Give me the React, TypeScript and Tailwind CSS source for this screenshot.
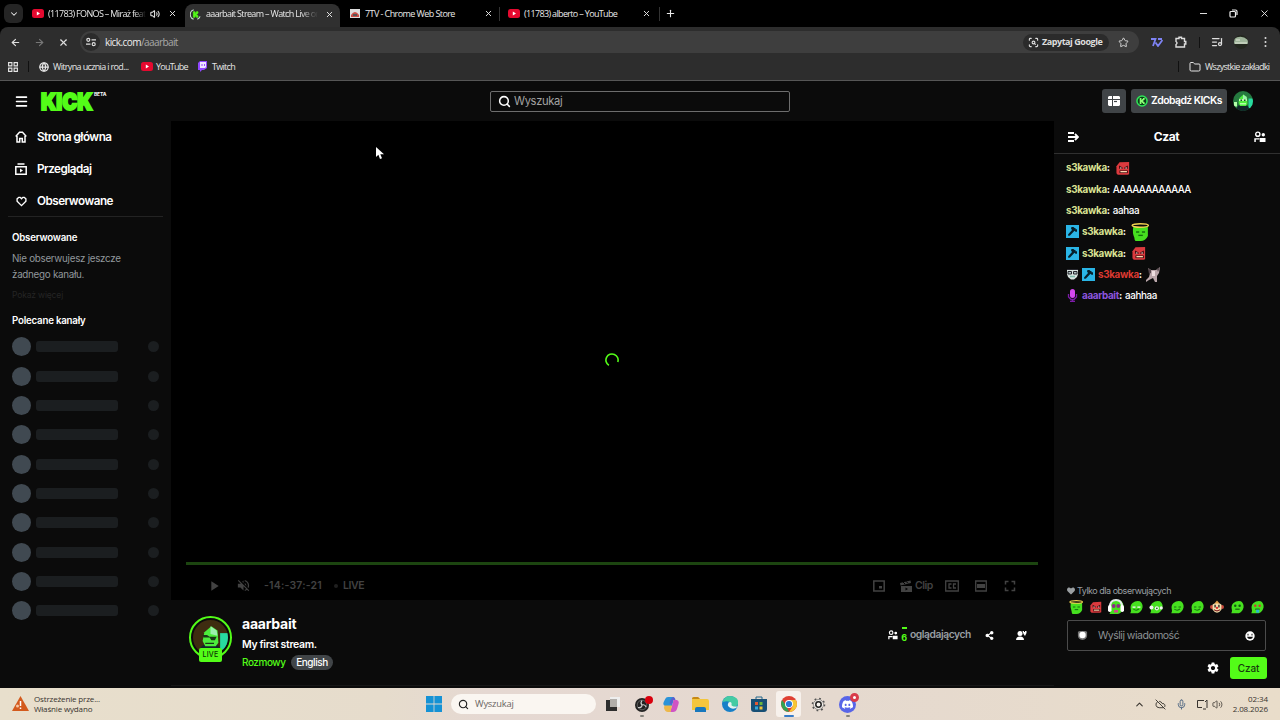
import React from 'react';
import { ArrowLeft, ArrowRight, ChevronDown, ChevronUp, Folder, Globe, Menu, Plus, Search, Star, Volume2, X, ScanSearch, Mic, CloudOff, ListMusic } from 'lucide-react';
import { FaShareAlt, FaHeart } from 'react-icons/fa';
import { MdSettings, MdVolumeOff, MdPlayArrow, MdFullscreen } from 'react-icons/md';
import { SiDiscord } from 'react-icons/si';

type EmoteKind = 'halo' | 'angry' | 'phones' | 'wink' | 'side' | 'smile' | 'lean' | 'clown' | 'think' | 'cry';

const YouTubeIcon = () => (
    <svg width="12" height="9" viewBox="0 0 12 9" className="shrink-0">
        <rect width="12" height="9" rx="2.5" fill="#e5092f" />
        <path d="M4.8 2.6v3.8L8 4.5z" fill="#fff" />
    </svg>
);

const KickBadge = ({ size = 11, dark = false }: { size?: number; dark?: boolean }) => (
    <svg width={size} height={size} viewBox="0 0 12 12" className="shrink-0">
        {dark ? (
            <path d="M4 .8A5.500 5.500 0 0 0 4 11.200M8 11.200A5.500 5.500 0 0 0 11 8" fill="none" stroke="#c5ded0" strokeWidth="1.200" />
        ) : (
            <>
                <circle cx="6" cy="6" r="5.800" fill="#2fe658" />
                <circle cx="6" cy="6" r="4.300" fill="#0a3d19" />
            </>
        )}
        <path d="M3.700 3h1.700v1.800h.7V4h.8V3h1.800v1.700h-.8v.8H7v1h.9v.8h.8V9H6.900V8h-.8v-.8h-.7V9H3.700z" fill={dark ? '#53fc18' : '#8dff74'} stroke={dark ? '#53fc18' : 'none'} strokeWidth=".8" />
    </svg>
);

const Emote = ({ kind, size = 14 }: { kind: EmoteKind; size?: number }) => {
    const red = kind === 'angry';
    const plain = kind === 'halo' || kind === 'wink' || kind === 'smile' || kind === 'lean';
    return (
        <svg width={size} height={size} viewBox="0 0 16 16" className="shrink-0">
            {red && (
                <>
                    <path d="M4 1.500L15 1v14l-2 .8H2L.5 14V6z" fill="#dc3a3e" />
                    <path d="M3.500 5l4 2.300v1.500h-4zM13.500 5l-4 2.300v1.500h4z" fill="#3a0a0e" />
                    <path d="M4.500 8h1.800M10.700 8h1.800" stroke="#ffe9e0" strokeWidth="1.200" />
                    <path d="M4 10.800h9.500v3H4z" fill="#3a0a0e" />
                    <path d="M5 12.200h7.500" stroke="#ffd6b0" strokeWidth="1.500" />
                </>
            )}
            {kind === 'clown' && (
                <>
                    <circle cx="2.300" cy="8" r="2.300" fill="#c94a3d" />
                    <circle cx="13.700" cy="8" r="2.300" fill="#c94a3d" />
                    <path d="M3 5Q8 1 13 5v6q-5 7-10 0z" fill="#f5dfad" />
                    <path d="M5 4l3-3.500L11 4z" fill="#e5a04c" />
                    <path d="M5.800 5.500v3M10.200 5.500v3" stroke="#202020" strokeWidth="1.500" />
                    <circle cx="8" cy="9" r="1.300" fill="#e12e2e" />
                    <path d="M4.500 11q3.500 3 7 0" stroke="#7d2222" strokeWidth="1.300" fill="none" />
                </>
            )}
            {!red && kind !== 'clown' && (
                <>
                    <path d={kind === 'halo' ? 'M2 3.500h13v8Q13 16 8.500 16H4q-1-1-1-3Q1 9 2 3.500z' : 'M4 3.500Q8 0 12.500 1.500Q16 4 15.500 8.500Q14 14 10 15H1.500q1.500-2 .5-4.500Q1 6 4 3.500z'} fill="#46e01f" />
                    {plain && (
                        <>
                            <path d="M4.500 8h2.800M9.700 8h2.800" stroke="#14720f" strokeWidth="1.200" />
                            <path d={kind === 'halo' ? 'M6.500 11h4' : 'M5 10.500q3.500 2.500 6.500-.3'} stroke="#14720f" strokeWidth="1.200" fill="none" />
                        </>
                    )}
                    {kind === 'wink' && <path d="M4 7h3.500v2H4zM9.500 7H13v2H9.500z" fill="#c9f7c0" />}
                    {kind === 'halo' && <ellipse cx="8.200" cy="2.200" rx="7.200" ry="1.500" fill="none" stroke="#f2d34f" strokeWidth="1.300" />}
                    {kind === 'phones' && (
                        <>
                            <path d="M2 8Q2 1 8 1t6 7" stroke="#e4ecec" strokeWidth="2" fill="none" />
                            <rect x="0" y="6" width="3.500" height="7" rx="1.700" fill="#fff" />
                            <rect x="12.500" y="6" width="3.500" height="7" rx="1.700" fill="#fff" />
                            <circle cx="5.700" cy="7" r="1.900" fill="#8b2b86" />
                            <circle cx="10.300" cy="7" r="1.900" fill="#8b2b86" />
                            <path d="M6 11h4v2.500H6z" fill="#d1458c" />
                        </>
                    )}
                    {kind === 'side' && (
                        <>
                            <circle cx="2.800" cy="8.500" r="2.300" fill="#f2f2f2" />
                            <circle cx="14" cy="9" r="1.800" fill="#f2f2f2" />
                            <circle cx="9" cy="9.500" r="2.400" fill="#f2f2f2" />
                            <circle cx="9" cy="9.500" r="1" fill="#14720f" />
                        </>
                    )}
                    {(kind === 'think' || kind === 'cry') && (
                        <>
                            <circle cx="6" cy="6.500" r="1.400" fill={kind === 'cry' ? '#d13636' : '#14560f'} />
                            <circle cx="11" cy="6.500" r="1.400" fill={kind === 'cry' ? '#d13636' : '#14560f'} />
                            <path d="M6 10.500h5" stroke="#14560f" strokeWidth="1.300" />
                            {kind === 'cry' && <path d="M7 11h3.500v3.500H7z" fill="#29b8cf" />}
                        </>
                    )}
                </>
            )}
        </svg>
    );
};

const ModBadge = () => (
    <svg width="13" height="13" viewBox="0 0 13 13" className="mr-[3px] shrink-0">
        <rect width="13" height="13" fill="#2ab5e6" />
        <path d="M5.500 2h2l1 1h1v1.200h1.500v2.500H9.500l-1-1L4 10.500L2.500 11L2 9.500L6 5L5 3.500z" fill="#06202b" />
    </svg>
);

const UsersIcon = ({ size = 12, className = '' }: { size?: number; className?: string }) => (
    <svg width={size} height={size} viewBox="0 0 12 12" className={className} fill="currentColor">
        <circle cx="3.800" cy="3.200" r="2.100" fill="none" stroke="currentColor" strokeWidth="1.400" />
        <circle cx="9.300" cy="3.700" r="1.700" />
        <path d="M.3 11V7.200h5v1.400H1.800V11zM5.700 7h5.800v4H5.700z" />
    </svg>
);

const StreamerAvatar = ({ size, bright = false }: { size: number; bright?: boolean }) => (
    <svg width={size} height={size} viewBox="0 0 40 40" className="rounded-full">
        <rect width="40" height="40" fill={bright ? '#25793f' : '#3e2c10'} />
        <rect x="31" y="15" width="9" height="19" fill="#27dba0" />
        <path d="M7 40q0-11 7-12h12q7 2 6 12z" fill="#11252a" />
        <path d="M13 14l8-7l7 5l1 14l-3 4H14l-3-6z" fill="#4cec3c" />
        <path d="M20 7l7 5l1 6l-8-2z" fill="#9bf1ae" />
        {!bright && <path d="M11 17h5l3 2h8l-2 4h-4l-2-3h-7zM14 26h10v1.300H14z" fill="#173616" />}
        {bright && <path d="M12 16h16v4H12zM14 24h12v3H14zM2 22h6v9H2z" fill="#b4ffa9" />}
        {bright && <path d="M15 17h3v3h-3zM22 17h3v3h-3z" fill="#174d2b" />}
    </svg>
);

const TabText = ({ width, children }: { width: string; children: React.ReactNode }) => (
    <span className={`${width} shrink-0 whitespace-nowrap text-[9px] leading-[14px]`}>{children}</span>
);

const BrowserTabs = () => (
    <div className="flex h-[27px] shrink-0 items-center bg-black pl-1 font-['Open_Sans',sans-serif] font-medium tracking-[-0.66px] text-[#e9e9e9]">
        <div className="flex h-[19px] w-[19px] items-center justify-center rounded-md bg-[#252525]"><ChevronDown size={10} strokeWidth={2.5} /></div>
        <div className="flex w-[162px] shrink-0 items-center pl-[9px]">
            <YouTubeIcon />
            <span className="w-1" />
            <TabText width="w-[98px] [mask-image:linear-gradient(90deg,black_88%,transparent)]">(11783) FONOS – Miraż feat</TabText>
            <Volume2 size={10} strokeWidth={2.5} className="ml-[4px]" />
            <X size={9} strokeWidth={2.5} className="ml-[8px]" />
        </div>
        <div className="flex h-[23px] w-[155px] shrink-0 items-center self-end rounded-t-lg bg-[#303030] pb-[3px] pl-[5px]">
            <KickBadge dark />
            <span className="w-[5px]" />
            <TabText width="w-[112px] [mask-image:linear-gradient(90deg,black_84%,transparent)]">aaarbait Stream – Watch Live on</TabText>
            <X size={9} strokeWidth={2.5} className="ml-[7px]" />
        </div>
        <div className="flex w-[160px] shrink-0 items-center border-r border-[#333] pl-[10px]">
            <svg width="10" height="9" viewBox="0 0 10 9"><rect width="10" height="9" fill="#ddd" /><path d="M1 6q4-6 8 0v2H1z" fill="#c94c45" /><path d="M3 5h4v2H3z" fill="#555" /></svg>
            <span className="w-[5px]" />
            <TabText width="w-[113px] tracking-[-0.58px]">7TV - Chrome Web Store</TabText>
            <X size={9} strokeWidth={2.5} className="ml-[6px]" />
        </div>
        <div className="flex w-[160px] shrink-0 items-center border-r border-[#333] pl-[8px]">
            <YouTubeIcon />
            <span className="w-[4px]" />
            <TabText width="w-[113px]">(11783) alberto – YouTube</TabText>
            <X size={9} strokeWidth={2.5} className="ml-[5px]" />
        </div>
        <Plus size={11} strokeWidth={2.4} className="ml-[5px]" />
        <div className="ml-auto flex items-center pr-[10px]">
            <span className="mr-[22px] h-px w-[7px] bg-[#ddd]" />
            <svg width="9" height="9" viewBox="0 0 9 9" fill="none" stroke="#eee" strokeWidth="1.200" className="mr-[21px]"><rect x="1" y="2.500" width="5.500" height="5.500" rx="1" /><path d="M3 1h3.500Q8 1 8 2.500V6" /></svg>
            <X size={11} strokeWidth={2} />
        </div>
    </div>
);

const Toolbar = () => (
    <div className="shrink-0 bg-black">
        <div className="flex h-[29px] items-center rounded-t-lg bg-[#2d2d2d] pl-[10px] pt-[1px] font-['Open_Sans',sans-serif] text-[#dedede]">
            <ArrowLeft size={11} strokeWidth={2.5} />
            <ArrowRight size={11} strokeWidth={2.5} className="ml-[13px] text-[#777]" />
            <X size={11} strokeWidth={2.5} className="ml-[13px]" />
            <div className="ml-[11px] flex h-[22px] w-[1059px] shrink-0 items-center rounded-full bg-[#3e3e3e] pl-[2px]">
                <span className="flex h-[18px] w-[18px] items-center justify-center rounded-full bg-[#2b2b2b]">
                    <svg width="10" height="10" viewBox="0 0 10 10" fill="none" stroke="currentColor" strokeWidth="1.200"><circle cx="2.300" cy="2.800" r="1.500" /><path d="M5.500 2.800H10M0 7.200h4.500" /><circle cx="7.700" cy="7.200" r="1.500" /></svg>
                </span>
                <span className="ml-[5px] text-[10px] tracking-[-0.58px] text-[#a9a9a9]"><span className="text-[#eee]">kick.com</span>/aaarbait</span>
                <div className="ml-auto flex h-[17px] w-[86px] shrink-0 items-center rounded-full bg-[#2b2b2b] pl-[5px]">
                    <ScanSearch size={11} strokeWidth={2.5} />
                    <span className="ml-[3px] whitespace-nowrap text-[9px] font-bold tracking-[-0.45px]">Zapytaj Google</span>
                </div>
                <Star size={11} strokeWidth={2} className="ml-[9px] mr-[10px] shrink-0" />
            </div>
            <svg width="12" height="9" viewBox="0 0 12 9" className="ml-[12px]" fill="none" stroke="#7e83f4" strokeWidth="1.800"><path d="M0 1h4.500L2 8M4.500 4.500L7 8l4.500-6M7 1h4" /></svg>
            <svg width="12" height="12" viewBox="0 0 12 12" fill="none" stroke="currentColor" strokeWidth="1.400" className="ml-[12px]"><path d="M1 2.500h3V1.200h2.500v1.300h3V5.500h1.300V8H9.500v3H1V8.500q2-1.500 0-3z" /></svg>
            <span className="ml-[12px] h-[11px] w-px bg-[#111]" />
            <ListMusic size={12} strokeWidth={2.5} className="ml-[11px]" />
            <svg width="14" height="14" viewBox="0 0 14 14" className="ml-[11px] rounded-full"><rect width="14" height="14" fill="#23271f" /><path d="M0 4q7-5 14 1v4H0z" fill="#9fb49b" /><path d="M2 5h4M1 8h12" stroke="#e1e7d8" /></svg>
            <svg width="3" height="10" viewBox="0 0 3 10" fill="currentColor" className="ml-[16px]"><circle cx="1.500" cy="1" r="1" /><circle cx="1.500" cy="5" r="1" /><circle cx="1.500" cy="9" r="1" /></svg>
        </div>
        <div className="flex h-[25px] items-center border-b border-[#565656] bg-[#2d2d2d] pb-[3px] pl-[8px] font-['Open_Sans',sans-serif] text-[9px] font-medium tracking-[-0.65px] text-[#e6e6e6]">
            <svg width="10" height="10" viewBox="0 0 10 10" fill="none" stroke="currentColor" strokeWidth="1.100"><path d="M.6.6h3.300v3.300H.6zM6.100.6h3.300v3.300H6.100zM.6 6.100h3.300v3.300H.6zM6.100 6.100h3.300v3.300H6.100z" /></svg>
            <span className="ml-[10px] h-[11px] w-px bg-[#101010]" />
            <Globe size={10} strokeWidth={3} className="ml-[10px]" />
            <span className="ml-[4px] w-[88px] whitespace-nowrap">Witryna ucznia i rod...</span>
            <YouTubeIcon />
            <span className="ml-[3px] w-[41px] tracking-[-0.75px]">YouTube</span>
            <svg width="11" height="11" viewBox="0 0 11 11"><path d="M1 2l2-2h7v7L7 9H5l-2 2V9H1z" fill="#9147ff" /><path d="M3 1h6v5L8 7H3z" fill="#eee5ff" /><path d="M5 3v2M7.500 3v2" stroke="#9147ff" /></svg>
            <span className="ml-[4px] tracking-[-0.7px]">Twitch</span>
            <div className="ml-auto flex items-center pr-[10px]">
                <span className="mr-[10px] h-[11px] w-px bg-[#101010]" />
                <Folder size={12} strokeWidth={2} />
                <span className="ml-[4px] w-[65px] whitespace-nowrap tracking-[-0.7px]">Wszystkie zakładki</span>
            </div>
        </div>
    </div>
);

const KickHeader = () => (
    <header className="flex h-[40px] shrink-0 items-center bg-[#0b0b0b] pl-[14px]">
        <Menu size={15} strokeWidth={2.5} />
        <div className="ml-[12px] flex h-[20px] w-[65px] items-start">
            <span className="w-[53px] origin-left translate-y-[1px] scale-x-[0.86] text-[23.5px] font-black leading-[20px] text-[#53fc18] [-webkit-text-stroke:2px_#53fc18]">KICK</span>
            <span className="text-[5px] font-bold leading-[6px] tracking-[-0.2px]">BETA</span>
        </div>
        <div className="ml-[384px] flex h-[21px] w-[300px] items-center rounded-[2px] border border-[#6d6d6d] bg-[#0b0b0b] pl-[7px]">
            <Search size={13} strokeWidth={2.8} />
            <span className="ml-[3px] pt-px text-[11.2px] tracking-[-0.35px] text-[#a3a3a3]">Wyszukaj</span>
        </div>
        <div className="ml-[312px] flex h-[24px] w-[24px] items-center justify-center rounded-[3px] bg-[#404447]">
            <svg width="12" height="10" viewBox="0 0 12 10" fill="#fff"><path d="M1 0h3v3H0V1zM5 0h6l1 1v2H5zM0 4h4v6H1L0 9zM5 4h7v5l-1 1H5z" /><path d="M6 5.500h3" stroke="#404447" strokeWidth="1.200" /></svg>
        </div>
        <div className="ml-[5px] flex h-[24px] w-[96px] items-center rounded-[3px] bg-[#404447] pl-[5px]">
            <KickBadge size={12} />
            <span className="ml-[3px] whitespace-nowrap text-[10.4px] font-semibold tracking-[-0.55px]">Zdobądź KICKs</span>
        </div>
        <div className="ml-[6px]"><StreamerAvatar size={20} bright /></div>
    </header>
);

const Sidebar = () => (
    <aside className="flex w-[171px] shrink-0 flex-col bg-[#0b0b0b]">
        <nav className="mx-[8px] h-[96px] border-b border-[#232323] text-[11.7px] font-semibold tracking-[-0.5px]">
            <div className="flex h-[32px] items-center pl-[7px]">
                <svg width="12" height="12" viewBox="0 0 12 12" fill="none" stroke="#fff" strokeWidth="1.500"><path d="M.7 5.500L4.500 1.300h3l3.800 4.200M2 5v6h2.700V7.500h2.600V11H10V5" /></svg>
                <span className="ml-[10px] pt-px">Strona główna</span>
            </div>
            <div className="flex h-[32px] items-center pl-[7px]">
                <svg width="12" height="12" viewBox="0 0 12 12" fill="none" stroke="#fff" strokeWidth="1.500"><path d="M2.500 1h7M.8 3.800h10.400v7.400H.8z" /><path d="M5 5.500v4l3-2z" fill="#fff" stroke="none" /></svg>
                <span className="ml-[10px] pt-px">Przeglądaj</span>
            </div>
            <div className="flex h-[32px] items-center pl-[8px]">
                <svg width="11" height="11" viewBox="0 0 12 12" fill="none" stroke="#fff" strokeWidth="1.500"><path d="M6 10.500L1.200 5.800V3L3 1.500h1.500L6 3l1.500-1.500H9L10.800 3v2.800z" /></svg>
                <span className="ml-[10px] pt-px">Obserwowane</span>
            </div>
        </nav>
        <div className="pl-[12px] pt-[14px]">
            <h2 className="text-[9.7px] font-semibold leading-[14px] tracking-[-0.2px]">Obserwowane</h2>
            <p className="mt-[6px] text-[9.8px] leading-4 tracking-[-0.27px] text-[#91979b]">Nie obserwujesz jeszcze<br />żadnego kanału.</p>
            <p className="mt-[5px] text-[8.5px] leading-[14px] tracking-[-0.15px] text-[#252525]">Pokaż więcej</p>
            <h2 className="mt-[12px] text-[9.7px] font-semibold leading-[14px] tracking-[-0.2px]">Polecane kanały</h2>
        </div>
        <div className="mt-[4px] flex flex-col">
            {Array.from({ length: 10 }, (_, index) => (
                <div key={index} className="flex h-[29.35px] items-center pl-[12px]">
                    <span className="h-[19px] w-[19px] rounded-full bg-[#404951]" />
                    <span className="ml-[5px] h-[11px] w-[82px] rounded-[3px] bg-[#1b1e20]" />
                    <span className="ml-[30px] h-[11px] w-[11px] rounded-full bg-[#1b1e20]" />
                </div>
            ))}
        </div>
    </aside>
);

const Player = () => (
    <div className="relative flex h-[479px] shrink-0 flex-col justify-end bg-black">
        <svg width="14" height="14" viewBox="0 0 14 14" className="absolute left-[434px] top-[232px]" fill="none" stroke="#53fc18" strokeWidth="1.600">
            <path d="M3.900 12.300A6.100 6.100 0 1 1 12.800 9" />
        </svg>
        <svg width="9" height="14" viewBox="0 0 9 14" className="absolute left-[204px] top-[25px]">
            <path d="M1 1v10l2.400-2.200L5 13l2-.8l-1.700-3.900H9z" fill="#fff" />
        </svg>
        <div className="ml-[15px] mr-[16px] h-[3px] bg-[#1c4510]" />
        <div className="flex h-[35px] items-center pl-[35px] pt-[6px] text-[10.5px] font-semibold text-[#424242]">
            <MdPlayArrow size={16} />
            <MdVolumeOff size={15} className="ml-[14px]" />
            <span className="ml-[13px] w-[59px] whitespace-nowrap pt-px tracking-[0.2px]">-14:-37:-21</span>
            <span className="ml-[11px] h-[4px] w-[4px] rounded-full bg-[#202020]" />
            <span className="ml-[5px] pt-px tracking-[-0.4px]">LIVE</span>
            <div className="ml-auto flex items-center pr-[35px]">
                <svg width="12" height="12" viewBox="0 0 12 12" fill="none" stroke="currentColor" strokeWidth="1.500"><path d="M.8 1h10.400v10H.8z" /><path d="M6 6h3v2.500H6z" fill="currentColor" stroke="none" /></svg>
                <svg width="12" height="12" viewBox="0 0 12 12" fill="currentColor" className="ml-[15px]"><path d="M0 3l10.500-2.500l.5 2.500L.5 5.500zM1 6h11v6H1z" /><path d="M3 2l2 2M6 1.300l2 2" stroke="#000" /><path d="M5.500 7.500v3L8 9z" fill="#000" /></svg>
                <span className="ml-[3px] w-[17px] pt-px tracking-[-0.5px]">Clip</span>
                <svg width="14" height="12" viewBox="0 0 14 12" fill="none" stroke="currentColor" strokeWidth="1.300" className="ml-[13px]"><path d="M.7 1h12.600v10H.7zM6.500 4H4v4h2.500M11 4H8.500v4H11" /></svg>
                <svg width="12" height="12" viewBox="0 0 12 12" fill="none" stroke="currentColor" strokeWidth="1.300" className="ml-[16px]"><path d="M.7 1h10.600v10H.7z" /><path d="M2 4h8v4H2z" fill="currentColor" stroke="none" /></svg>
                <MdFullscreen size={18} className="ml-[14px]" />
            </div>
        </div>
    </div>
);

const StreamInfo = () => (
    <div className="flex h-[86px] shrink-0 border-b border-[#171717] pl-[18px] pt-[16px]">
        <div className="relative h-[43px] w-[43px] rounded-full border-2 border-[#53fc18] p-[2px]">
            <StreamerAvatar size={35} />
            <span className="absolute left-[8px] top-[30px] flex h-[14px] w-[23px] items-center justify-center rounded-[2px] bg-[#53fc18] text-[7px] font-medium tracking-[0.3px] text-[#0b3205]">LIVE</span>
        </div>
        <div className="ml-[10px]">
            <h1 className="text-[14px] font-bold leading-[16px] tracking-[-0.25px]">aaarbait</h1>
            <p className="mt-[6px] text-[10.5px] font-semibold leading-[14px] tracking-[-0.35px]">My first stream.</p>
            <div className="mt-[2px] flex h-[16px] items-center text-[10px] font-medium tracking-[-0.45px]">
                <span className="w-[44px] pt-px">
                    <span className="text-[#53fc18]">Rozmowy</span>
                </span>
                <span className="ml-[5px] flex h-[15px] w-[42px] items-center justify-center rounded-full bg-[#414548]">English</span>
            </div>
        </div>
        <div className="ml-auto flex h-[38px] items-center pr-[27px] text-[10.3px] font-semibold tracking-[-0.45px] text-[#979ea2]">
            <UsersIcon size={10} className="text-white" />
            <span className="ml-[2px] flex h-[16px] w-[8px] flex-col items-center justify-between text-[#53fc18]">
                <span className="h-[2px] w-[5px] bg-[#53fc18]" />
                <span className="text-[9px] font-bold leading-[10px]">6</span>
            </span>
            <span className="ml-[2px] w-[61px]">oglądających</span>
            <FaShareAlt size={9} className="ml-[14px] text-white" />
            <svg width="11" height="11" viewBox="0 0 11 11" fill="#fff" className="ml-[22px]"><circle cx="4" cy="3.500" r="2.500" /><path d="M0 10Q0 6.500 4 6.500T8 10zM6.500 1H8v1h1V1h1.500v2L9 6L7.500 4z" /></svg>
        </div>
    </div>
);

const Username = ({ color, name = 's3kawka' }: { color: string; name?: string }) => (
    <span className="font-bold"><span className={color}>{name}</span>:</span>
);

const Chat = () => (
    <section className="flex w-[226px] shrink-0 flex-col bg-[#0b0b0b]">
        <div className="flex h-[33px] shrink-0 items-center justify-between border-b border-[#303030] pl-[14px] pr-[14px] text-[12px] font-bold tracking-[-0.4px]">
            <svg width="11" height="10" viewBox="0 0 11 10" fill="none" stroke="#fff" strokeWidth="1.800"><path d="M0 1h6M0 5h10M0 9h6M7 2l3 3l-3 3" /></svg>
            <span>Czat</span>
            <UsersIcon size={12} />
        </div>
        <div className="flex flex-col pl-[12px] pt-[3px] text-[9.9px] font-medium tracking-[-0.35px] [&>div]:flex [&>div]:h-[21.35px] [&>div]:items-center">
            <div><Username color="text-[#dbe293]" /><span className="w-[6px]" /><Emote kind="angry" size={14} /></div>
            <div><Username color="text-[#dbe293]" /><span className="ml-[3px] tracking-[-0.65px]">AAAAAAAAAAAA</span></div>
            <div><Username color="text-[#dbe293]" /><span className="ml-[3px]">aahaa</span></div>
            <div><ModBadge /><Username color="text-[#dbe293]" /><span className="w-[5px]" /><Emote kind="halo" size={18} /></div>
            <div><ModBadge /><Username color="text-[#dbe293]" /><span className="w-[6px]" /><Emote kind="angry" size={14} /></div>
            <div>
                <svg width="13" height="12" viewBox="0 0 13 12" className="mr-[3px]"><path d="M1 1h11v5l-1 3l-3 2.500H5L2 9L1 6z" fill="#d8e3df" /><path d="M1 1.500h11M2 3.500h3.500v2.500H2zM7.500 3.500H11v2.500H7.500z" stroke="#26262c" fill="#aebfc0" /><path d="M4 8.500h5" stroke="#7db8a8" strokeWidth="1.500" /></svg>
                <ModBadge /><Username color="text-[#dc3931]" />
                <svg width="17" height="17" viewBox="0 0 17 17" className="ml-[2px]"><path d="M4 2l3 2h5l4-3l-1 6l-2 3v6h-2l-2-4l-4 2l-3 2v-2l3-3l1-4z" fill="#bba7ab" /><path d="M4 2l3 2v3L5 8zM13 3l3-2l-2 5z" fill="#54464c" /><path d="M8 5h3v5H8z" fill="#eedee0" /></svg>
            </div>
            <div>
                <svg width="13" height="13" viewBox="0 0 13 13" className="mr-[3px]"><rect x="4" y="0" width="5" height="9" rx="2.500" fill="#d449f0" /><path d="M2.500 5v3l2.500 2.500h3L10.500 8V5M6.500 10v3M4 12.500h5" stroke="#7d1ca9" strokeWidth="1.300" fill="none" /></svg>
                <Username color="text-[#8d55df]" name="aaarbait" /><span className="ml-[3px]">aahhaa</span>
            </div>
        </div>
        <div className="mt-auto pb-[9px] pl-[13px] pr-[14px]">
            <div className="flex h-[13px] items-center whitespace-nowrap text-[9px] tracking-[-0.48px] text-[#9a9fa2]"><FaHeart size={8} className="mr-[2px]" />Tylko dla obserwujących</div>
            <div className="mt-[1px] flex justify-between pl-[1px] pr-[1px]">
                {(['halo', 'angry', 'phones', 'wink', 'side', 'smile', 'lean', 'clown', 'think', 'cry'] as EmoteKind[]).map((kind) => (
                    <span key={kind} className="flex h-[17px] w-[16px] items-center justify-center"><Emote kind={kind} size={kind === 'phones' ? 16 : kind === 'angry' ? 12 : 14} /></span>
                ))}
            </div>
            <div className="mt-[5px] flex h-[31px] items-center rounded-[2px] border border-[#4b4b4b] pl-[9px] pr-[10px] text-[10.5px] tracking-[-0.5px] text-[#8d9194]">
                <svg width="11" height="11" viewBox="0 0 12 12"><path d="M1 2l2-1h6l2 1v4q0 4-5 5Q1 10 1 6z" fill="#777" /><circle cx="6" cy="5.500" r="3.500" fill="#fff" /></svg>
                <span className="ml-[10px] pt-px">Wyślij wiadomość</span>
                <svg width="10" height="10" viewBox="0 0 10 10" className="ml-auto"><circle cx="5" cy="5" r="4.700" fill="#fff" /><path d="M3 2.800v1.700M7 2.800v1.700" stroke="#111" /><path d="M2 5.800h6Q7.500 8 5 8T2 5.800z" fill="#111" /></svg>
            </div>
            <div className="-mr-px mt-[6px] flex h-[22px] items-center justify-end">
                <MdSettings size={14} />
                <span className="ml-[10px] flex h-[22px] w-[37px] items-center justify-center rounded-[3px] bg-[#53fc18] text-[10px] font-medium tracking-[-0.1px] text-[#163b0d]">Czat</span>
            </div>
        </div>
    </section>
);

const TaskIcon = ({ children, active, running }: { children: React.ReactNode; active?: boolean; running?: boolean }) => (
    <span className={`relative flex h-[26px] w-[25px] shrink-0 items-center justify-center rounded-[3px] ${active ? 'bg-[#f7f1ec]' : ''}`}>
        {children}
        {active && <span className="absolute bottom-0 h-[2px] w-[10px] rounded-full bg-[#377bc8]" />}
        {running && <span className="absolute bottom-0 h-[2px] w-[4px] rounded-full bg-[#85837c]" />}
    </span>
);

const Taskbar = () => (
    <footer className="flex h-[32px] shrink-0 items-center bg-[linear-gradient(90deg,#e8dfcc,#e6dccc_30%,#e5d8d2_38%,#e5d9cf_65%,#e9ddca)] font-['Open_Sans',sans-serif] text-[8px] text-[#37332e]">
        <svg width="17" height="16" viewBox="0 0 17 16" className="ml-[12px]"><path d="M8.500 0L17 15H0z" fill="#d35a1d" /><path d="M8.500 5v5M8.500 11.500v1.500" stroke="#fff" strokeWidth="1.500" /><circle cx="5.500" cy="10" r="1.500" fill="#f5c8a7" /></svg>
        <div className="ml-[5px] w-[392px] leading-[10.500px] tracking-[-0.15px]">Ostrzeżenie prze...<br />Właśnie wydano</div>
        <svg width="16" height="16" viewBox="0 0 16 16"><path d="M0 0h7.600v7.600H0zM8.400 0H16v7.600H8.400zM0 8.400h7.600V16H0zM8.400 8.400H16V16H8.400z" fill="#1592d5" /></svg>
        <div className="ml-[9px] flex h-[20px] w-[145px] items-center rounded-full bg-[#faf6f1] pl-[7px] text-[9.300px] tracking-[-0.2px] text-[#69645f]"><Search size={11} strokeWidth={2.5} className="mr-[6px] text-[#222]" />Wyszukaj</div>
        <div className="ml-[4px] flex items-center gap-[4.400px]">
            <TaskIcon><svg width="14" height="14" viewBox="0 0 14 14"><path d="M4 0h10v10H4z" fill="#eee" /><path d="M4 2h7v8H4z" fill="#b1aeaa" /><path d="M0 3h4v7h7v4H0z" fill="#2d2d2d" /></svg></TaskIcon>
            <TaskIcon running>
                <svg width="18" height="17" viewBox="0 0 18 17" className="ml-[4px]"><circle cx="7" cy="9" r="7" fill="#222" /><circle cx="7" cy="9" r="4.800" fill="none" stroke="#777" strokeWidth=".7" /><path d="M7 9Q5 7 7 4.500M7 9q3-1 4 2M7 9q0 3-4 2.500" stroke="#ccc" strokeWidth="1.200" fill="none" /><circle cx="14" cy="4" r="4" fill="#d9000d" /></svg>
            </TaskIcon>
            <TaskIcon><svg width="16" height="15" viewBox="0 0 16 15"><path d="M5 0h5q1.500 0 1 2L9 9H2Q-.5 8 .7 5l1.500-3Q3 0 5 0z" fill="#2b93d8" /><path d="M10.500 3H14q2.500 1 1.500 4L14 12q-1 3-4 3H7l2-6z" fill="#d054c4" /><path d="M1.500 8.500H9L7.500 15H5q-3 0-4-4z" fill="#edb84a" /><path d="M10 0q2 0 2.500 3H10L8.500 8L6.500 6L8 2z" fill="#5b5fd0" /></svg></TaskIcon>
            <TaskIcon><svg width="17" height="15" viewBox="0 0 17 15"><path d="M0 2q0-2 2-2h4l2 2h7q2 0 2 2v9H0z" fill="#f3c63c" /><path d="M0 2q0-2 2-2h4l2 2H0z" fill="#c68816" /><path d="M3 12q0-2 2-2h7q2 0 2 2v3H3z" fill="#1878bd" /></svg></TaskIcon>
            <TaskIcon><svg width="16" height="16" viewBox="0 0 16 16"><circle cx="8" cy="8" r="8" fill="#1780c8" /><path d="M.5 6Q3-1 10 .3t6 7.700q-1 3-5 3q-4 0-2-3Q8 4 .5 6z" fill="#45cba3" /><path d="M8 6q2 0 1.500 2.500T16 10.500Q12 14 8.500 12T6 8q0-2 2-2z" fill="#e5f2ef" /></svg></TaskIcon>
            <TaskIcon><svg width="16" height="16" viewBox="0 0 16 16"><path d="M5 3V1h6v2" stroke="#23678c" fill="none" /><path d="M0 3h16v10q0 3-3 3H3q-3 0-3-3z" fill="#174f75" /><path d="M4 6h3v3H4z" fill="#e15935" /><path d="M8.500 6h3v3h-3z" fill="#6ab63d" /><path d="M4 10.500h3v3H4z" fill="#32a8dc" /><path d="M8.500 10.500h3v3h-3z" fill="#f1c437" /></svg></TaskIcon>
            <TaskIcon active>
                <svg width="16" height="16" viewBox="0 0 16 16"><circle cx="8" cy="8" r="8" fill="#df3f32" /><path d="M1 4l4.500 6L8 16Q1 15 0 8q0-2 1-4z" fill="#32a253" /><path d="M8 4h7q3 7-3 11q-2 1-4 1l4-6z" fill="#f6c634" /><circle cx="8" cy="8" r="4" fill="#fff" /><circle cx="8" cy="8" r="3.100" fill="#2878d6" /></svg>
            </TaskIcon>
            <TaskIcon><svg width="15" height="15" viewBox="0 0 15 15" fill="none"><circle cx="7.500" cy="7.500" r="6" stroke="#555" strokeWidth="1.600" strokeDasharray="1.800 2.900" /><circle cx="7.500" cy="7.500" r="5" fill="#f8f4ef" stroke="#555" strokeWidth=".6" /><circle cx="7.500" cy="7.500" r="2.700" stroke="#222" strokeWidth="1.500" /></svg></TaskIcon>
            <TaskIcon running>
                <span className="flex h-[17px] w-[17px] items-center justify-center rounded-full bg-[#5865e8]"><SiDiscord size={11} color="#fff" /></span>
                <span className="absolute right-[1px] top-[2px] h-[9px] w-[9px] rounded-full border-[3px] border-[#d93b4a] bg-white" />
            </TaskIcon>
        </div>
        <div className="ml-auto flex items-center pr-[12px]">
            <ChevronUp size={11} strokeWidth={2.3} />
            <CloudOff size={11} className="ml-[10px]" />
            <Mic size={11} className="ml-[10px] text-[#4a6380]" />
            <svg width="11" height="11" viewBox="0 0 11 11" fill="none" stroke="currentColor" className="ml-[10px]"><path d="M7 1.500H.5v7H5M10 1v8M8 3l2-2M6 10h3" /></svg>
            <Volume2 size={11} strokeWidth={1.7} className="ml-[4px]" />
            <div className="ml-[5px] w-[40px] whitespace-nowrap text-right leading-[10.500px] tracking-[-0.1px]">02:34<br />2.08.2026</div>
        </div>
    </footer>
);

const App: React.FC = () => {
    return (
        <div className="flex h-[720px] w-[1280px] flex-col overflow-hidden bg-[#0b0b0b] font-['Inter',sans-serif] text-white">
            <BrowserTabs />
            <Toolbar />
            <KickHeader />
            <div className="flex h-[567px] shrink-0">
                <Sidebar />
                <main className="flex w-[883px] shrink-0 flex-col bg-[#0b0b0b]">
                    <Player />
                    <StreamInfo />
                </main>
                <Chat />
            </div>
            <Taskbar />
        </div>
    );
};

export default App;
